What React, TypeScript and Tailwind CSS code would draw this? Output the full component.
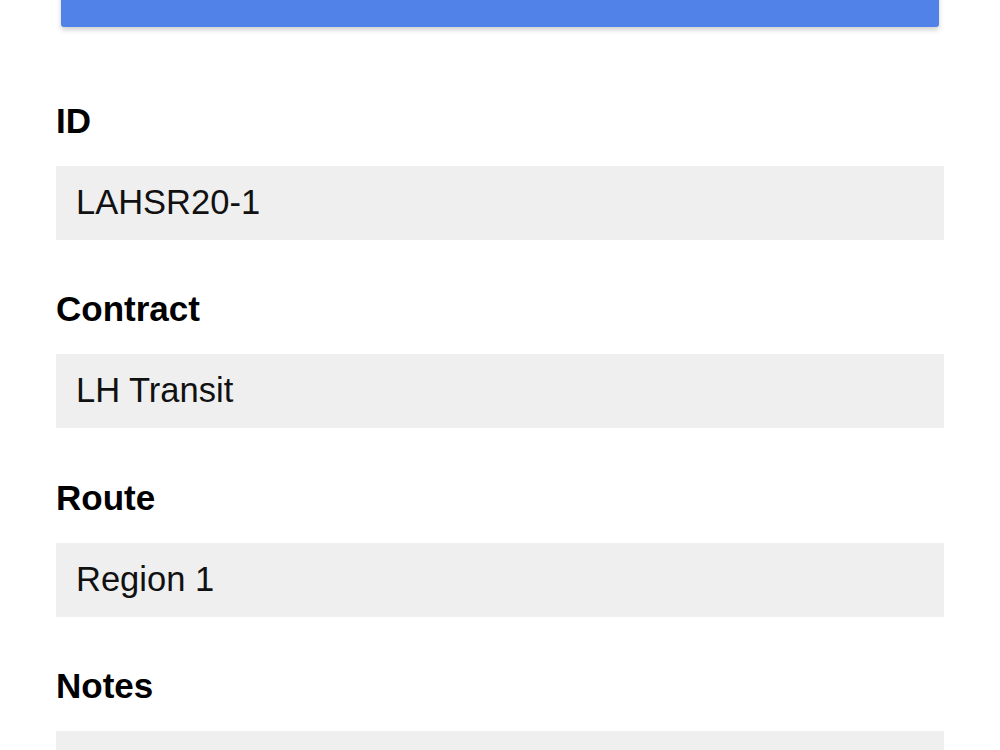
import React from "react";

type Field = { label: string; value: string };

const fields: Field[] = [
  { label: "ID", value: "LAHSR20-1" },
  { label: "Contract", value: "LH Transit" },
  { label: "Route", value: "Region 1" },
  { label: "Notes", value: "" },
];

export default function App() {
  return (
    <div
      className="h-[750px] w-[1000px] overflow-hidden bg-white"
      style={{ fontFamily: '"Liberation Sans", Arial, sans-serif' }}
    >
      <div className="px-[56px]">
        {/* bottom of the primary action button, scrolled mostly off screen */}
        <div className="mx-[5px] -mt-[40px] h-[67px] rounded-[3px] bg-[#5082e8] shadow-[0_3px_5px_rgba(0,0,0,0.18)]" />

        <form className="flex flex-col pt-[74px]">
          {fields.map((f, i) => (
            <div key={f.label} className={i === 0 ? "" : "mt-[49.3px]"}>
              <label className="block h-[40px] text-[35px] font-bold leading-[40px] text-black">
                {f.label}
              </label>
              <div className="mt-[25px] flex h-[74px] items-center bg-[#efefef] pl-[20px] text-[34.5px] text-[#111]">
                {f.value}
              </div>
            </div>
          ))}
        </form>
      </div>
    </div>
  );
}
